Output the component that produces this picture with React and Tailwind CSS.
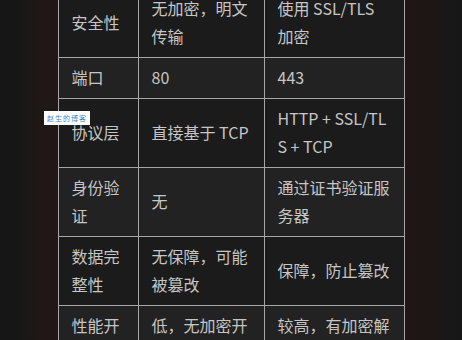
const rows = [
  ["安全性", "无加密，明文传输", "使用 SSL/TLS 加密"],
  ["端口", "80", "443"],
  ["协议层", "直接基于 TCP", "HTTP + SSL/TLS + TCP"],
  ["身份验证", "无", "通过证书验证服务器"],
  ["数据完整性", "无保障，可能被篡改", "保障，防止篡改"],
  ["性能开销", "低，无加密开销", "较高，有加密解密开销"],
];

export default function App() {
  return (
    <div className="relative h-[340px] w-[462px] overflow-hidden bg-[linear-gradient(90deg,#161616_0px,#171616_16px,#1f1816_42px,#1f1816_58px,#1e1715_404px,#1e1615_436px,#171817_446px,#161716_462px)] font-['Noto_Sans_CJK_SC','Noto_Sans',sans-serif] text-[16px] leading-[28px] text-[#c6c6c6]">
      <table className="mx-auto -mt-[12px] w-[346px] table-fixed border-collapse">
        <colgroup>
          <col className="w-[80px]" />
          <col className="w-[126px]" />
          <col className="w-[140px]" />
        </colgroup>
        <tbody>
          {rows.map((row, i) => (
            <tr key={row[0]} className={i % 2 === 1 ? "bg-[#222222]" : "bg-[#1b1b1b]"}>
              {row.map((cell, j) => (
                <td
                  key={j}
                  className="break-all border border-[#a6a6a6] px-[13px] pt-[5px] pb-[7px] align-middle"
                >
                  {cell}
                </td>
              ))}
            </tr>
          ))}
        </tbody>
      </table>

      {/* blog watermark */}
      <div className="absolute left-[44px] top-[111px] flex h-[14px] w-[46px] items-center justify-center bg-white text-[7px] leading-none tracking-[1px] text-[#3d86c6]">
        赵生的博客
      </div>
    </div>
  );
}
